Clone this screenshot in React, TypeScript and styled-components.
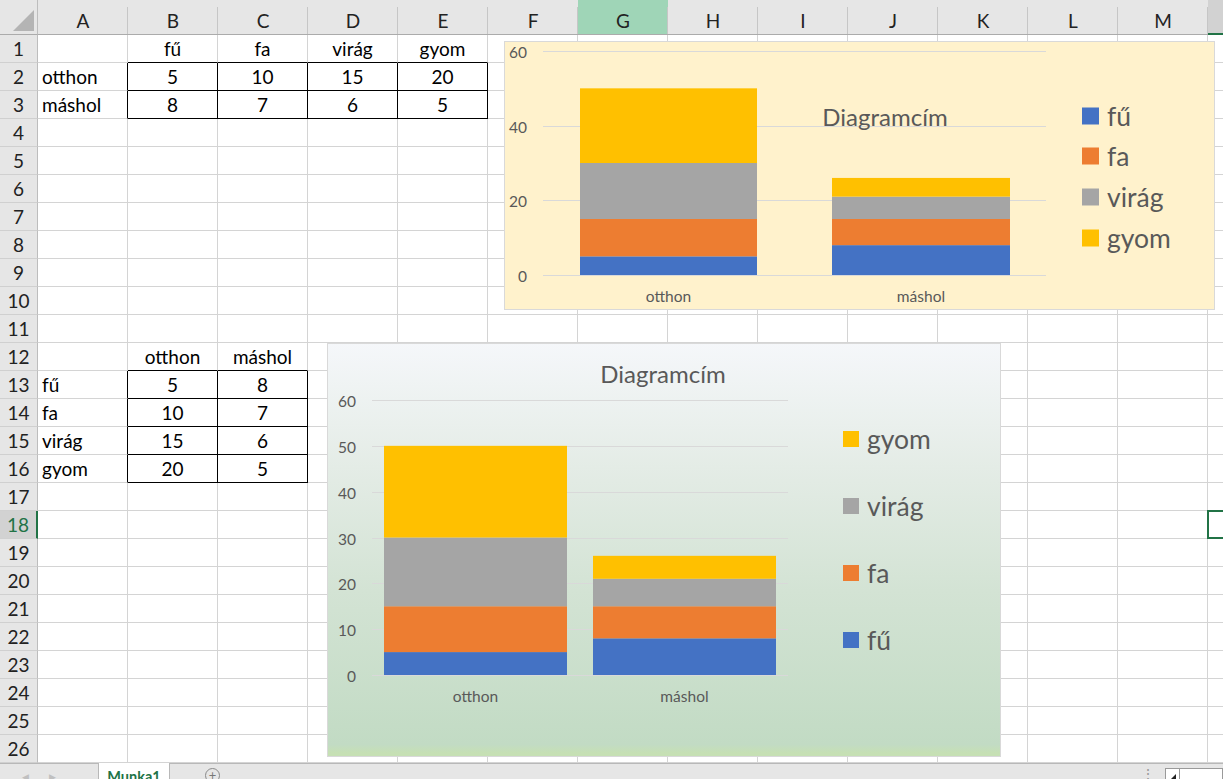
import React from "react";
import styled, { createGlobalStyle } from "styled-components";

const GlobalStyle = createGlobalStyle`
  html, body {
    margin: 0;
    padding: 0;
    background: #ffffff;
    overflow: hidden;
  }
  body {
    font-family: Lato, "Noto Sans", sans-serif;
  }
`;

const GREEN = "#217346";
const GRID = "#d4d4d4";
const SERIES = [
  { name: "fű", color: "#4472c4" },
  { name: "fa", color: "#ed7d31" },
  { name: "virág", color: "#a5a5a5" },
  { name: "gyom", color: "#ffc000" },
];
const HOME = [5, 10, 15, 20];
const AWAY = [8, 7, 6, 5];

const COLS = ["A", "B", "C", "D", "E", "F", "G", "H", "I", "J", "K", "L", "M", "N"];
const ROWS = 26;
const SELECTED_COL = "N";
const SELECTED_ROW = 18;
const HIGHLIGHT_COL = "G";

type CellData = { text: string; align: "left" | "center" };
const cells: Record<string, CellData> = {};
const put = (ref: string, text: string, align: "left" | "center" = "center") => {
  cells[ref] = { text, align };
};

// first table: categories as rows
put("A2", "otthon", "left");
put("A3", "máshol", "left");
["B", "C", "D", "E"].forEach((c, i) => {
  put(`${c}1`, SERIES[i].name);
  put(`${c}2`, String(HOME[i]));
  put(`${c}3`, String(AWAY[i]));
});

// second table: transposed
put("B12", "otthon");
put("C12", "máshol");
SERIES.forEach((s, i) => {
  put(`A${13 + i}`, s.name, "left");
  put(`B${13 + i}`, String(HOME[i]));
  put(`C${13 + i}`, String(AWAY[i]));
});

const boxes = [
  { c0: 1, c1: 4, r0: 2, r1: 3 },
  { c0: 1, c1: 2, r0: 13, r1: 16 },
];
const inBox = (ci: number, r: number) =>
  boxes.some((b) => ci >= b.c0 && ci <= b.c1 && r >= b.r0 && r <= b.r1);

const Page = styled.div`
  display: flex;
  flex-direction: column;
  height: 779px;
  overflow: hidden;
`;

const SheetArea = styled.div`
  position: relative;
  height: 763px;
  overflow: hidden;
  flex: none;
`;

const Grid = styled.div`
  display: grid;
  grid-template-columns: 38px repeat(${COLS.length}, 90px);
  grid-template-rows: 35px repeat(${ROWS}, 28px);
  width: max-content;
`;

const Corner = styled.div`
  background: #e6e6e6;
  border-right: 1px solid #bdbdbd;
  border-bottom: 1px solid #ababab;
  display: flex;
  align-items: flex-end;
  justify-content: flex-end;
  padding: 0 3px 3px 0;
  box-sizing: border-box;
`;

const ColHead = styled.div<{ $mode: "plain" | "chart" | "active" }>`
  position: relative;
  box-sizing: border-box;
  background: ${(p) => (p.$mode === "chart" ? "#9fd5b7" : p.$mode === "active" ? "#d2d2d2" : "#e6e6e6")};
  border-bottom: ${(p) => (p.$mode === "active" ? `2px solid ${GREEN}` : "1px solid #ababab")};
  color: #222;
  font-size: 19px;
  display: flex;
  align-items: center;
  justify-content: center;
  padding-top: 7px;
  &::after {
    content: "";
    position: absolute;
    right: 0;
    top: 7px;
    bottom: 0;
    width: 1px;
    background: #c6c6c6;
  }
`;

const RowHead = styled.div<{ $active: boolean }>`
  box-sizing: border-box;
  background: ${(p) => (p.$active ? "#d2d2d2" : "#e6e6e6")};
  border-right: ${(p) => (p.$active ? `2px solid ${GREEN}` : "1px solid #bdbdbd")};
  border-bottom: 1px solid #d0d0d0;
  color: ${(p) => (p.$active ? GREEN : "#222")};
  font-size: 19px;
  display: flex;
  align-items: center;
  justify-content: center;
`;

const Cell = styled.div<{ $align: "left" | "center"; $right: boolean; $bottom: boolean; $selected: boolean }>`
  position: relative;
  box-sizing: border-box;
  border-right: 1px solid ${(p) => (p.$right ? "#000" : GRID)};
  border-bottom: 1px solid ${(p) => (p.$bottom ? "#000" : GRID)};
  font-size: 19px;
  color: #000;
  display: flex;
  align-items: center;
  justify-content: ${(p) => (p.$align === "left" ? "flex-start" : "center")};
  padding: 0 4px;
  white-space: nowrap;
  &::after {
    content: "";
    display: ${(p) => (p.$selected ? "block" : "none")};
    position: absolute;
    left: -1px;
    top: -1px;
    right: -1px;
    bottom: -1px;
    border: 2px solid ${GREEN};
  }
`;

const CornerMark = () => (
  <svg width="21" height="21" viewBox="0 0 21 21">
    <polygon points="21,0 21,21 0,21" fill="#b4b4b4" />
  </svg>
);

/* ---------- charts ---------- */

const ChartFrame = styled.div<{ $x: number; $y: number; $w: number; $h: number; $bg: string }>`
  position: absolute;
  left: ${(p) => p.$x}px;
  top: ${(p) => p.$y}px;
  width: ${(p) => p.$w}px;
  height: ${(p) => p.$h}px;
  outline: 1px solid #d9d9d9;
  outline-offset: -1px;
  background: ${(p) => p.$bg};
  svg {
    display: block;
    overflow: visible;
  }
`;

type ChartGeo = {
  w: number;
  h: number;
  gridX0: number;
  gridX1: number;
  baseY: number;
  topY: number;
  step: number;
  labelX: number;
  bars: { x: number; w: number; values: number[]; label: string }[];
  catY: number;
  title: { x: number; y: number };
  legend: { x: number; size: number; ys: number[]; order: number[]; font: number };
};

const TEXT = "#595959";
const FONT = "Lato, 'Noto Sans', sans-serif";

const StackedChart: React.FC<{ g: ChartGeo }> = ({ g }) => {
  const unit = (g.baseY - g.topY) / 60;
  const ticks: number[] = [];
  for (let v = 0; v <= 60; v += g.step) ticks.push(v);
  return (
    <svg width={g.w} height={g.h} viewBox={`0 0 ${g.w} ${g.h}`}>
      {ticks.map((v) => {
        const y = Math.round(g.baseY - v * unit) + 0.5;
        return (
          <g key={v}>
            <line x1={g.gridX0} x2={g.gridX1} y1={y} y2={y} stroke="#d9d9d9" strokeWidth={1} />
            <text
              x={g.labelX}
              y={y}
              textAnchor="end"
              dominantBaseline="central"
              fontFamily={FONT}
              fontSize={15.5}
              fill={TEXT}
            >
              {v}
            </text>
          </g>
        );
      })}
      {g.bars.map((b) => {
        let acc = 0;
        return (
          <g key={b.label}>
            {b.values.map((v, i) => {
              const y0 = g.baseY - acc * unit;
              acc += v;
              const y1 = g.baseY - acc * unit;
              return <rect key={i} x={b.x} y={y1} width={b.w} height={y0 - y1} fill={SERIES[i].color} />;
            })}
            <text
              x={b.x + b.w / 2}
              y={g.catY}
              textAnchor="middle"
              dominantBaseline="central"
              fontFamily={FONT}
              fontSize={15.5}
              fill={TEXT}
            >
              {b.label}
            </text>
          </g>
        );
      })}
      <text
        x={g.title.x}
        y={g.title.y}
        textAnchor="middle"
        dominantBaseline="central"
        fontFamily={FONT}
        fontSize={24}
        fill={TEXT}
      >
        Diagramcím
      </text>
      {g.legend.order.map((si, k) => {
        const cy = g.legend.ys[k];
        return (
          <g key={si}>
            <rect
              x={g.legend.x}
              y={cy - g.legend.size / 2}
              width={g.legend.size}
              height={g.legend.size}
              fill={SERIES[si].color}
            />
            <text
              x={g.legend.x + g.legend.size + 8}
              y={cy}
              dominantBaseline="central"
              fontFamily={FONT}
              fontSize={g.legend.font}
              fill={TEXT}
            >
              {SERIES[si].name}
            </text>
          </g>
        );
      })}
    </svg>
  );
};

const topChart: ChartGeo = {
  w: 711,
  h: 269,
  gridX0: 39,
  gridX1: 542,
  baseY: 234,
  topY: 10,
  step: 20,
  labelX: 23,
  bars: [
    { x: 76, w: 177, values: HOME, label: "otthon" },
    { x: 328, w: 178, values: AWAY, label: "máshol" },
  ],
  catY: 255,
  title: { x: 381, y: 75 },
  legend: { x: 578, size: 17, ys: [75, 115, 156, 197], order: [0, 1, 2, 3], font: 26.5 },
};

const bottomChart: ChartGeo = {
  w: 674,
  h: 414,
  gridX0: 45,
  gridX1: 461,
  baseY: 332,
  topY: 57,
  step: 10,
  labelX: 29,
  bars: [
    { x: 57, w: 183, values: HOME, label: "otthon" },
    { x: 266, w: 183, values: AWAY, label: "máshol" },
  ],
  catY: 353,
  title: { x: 336, y: 30 },
  legend: { x: 516, size: 16, ys: [96, 163, 230, 297], order: [3, 2, 1, 0], font: 26.5 },
};

/* ---------- sheet tabs ---------- */

const TabBar = styled.div`
  flex: 1;
  background: #e6e6e6;
  border-top: 1px solid #b8b8b8;
  display: flex;
  align-items: flex-start;
  position: relative;
`;

const NavArrows = styled.div`
  width: 98px;
  display: flex;
  gap: 20px;
  padding: 7px 0 0 22px;
  box-sizing: border-box;
  color: #c0c0c0;
  font-size: 9px;
`;

const Tab = styled.div`
  width: 72px;
  height: 26px;
  box-sizing: border-box;
  margin-top: -1px;
  background: #ffffff;
  border-left: 1px solid #b8b8b8;
  border-right: 1px solid #b8b8b8;
  color: ${GREEN};
  font-weight: 700;
  font-size: 14.5px;
  display: flex;
  justify-content: center;
  padding-top: 5px;
`;

const AddSheet = styled.div`
  margin: 4px 0 0 35px;
  width: 15px;
  height: 15px;
  border: 1px solid #8a8a8a;
  border-radius: 50%;
  box-sizing: border-box;
  display: flex;
  align-items: center;
  justify-content: center;
  color: #777;
  font-size: 13px;
  line-height: 1;
`;

const RightTools = styled.div`
  margin-left: auto;
  display: flex;
  align-items: flex-start;
  gap: 10px;
  padding-top: 4px;
`;

const Dots = styled.div`
  color: #9a9a9a;
  font-size: 14px;
  line-height: 1;
  margin-top: -1px;
`;

const ScrollBox = styled.div`
  display: flex;
  align-items: flex-start;
  height: 20px;
  border: 1px solid #9a9a9a;
  background: #fff;
  width: 58px;
  box-sizing: border-box;
`;

const ScrollArrow = styled.div`
  width: 14px;
  height: 100%;
  border-right: 1px solid #9a9a9a;
  display: flex;
  align-items: flex-start;
  justify-content: center;
  padding-top: 5px;
  box-sizing: border-box;
`;

export default function App() {
  return (
    <>
      <GlobalStyle />
      <Page>
        <SheetArea>
          <Grid>
            <Corner>
              <CornerMark />
            </Corner>
            {COLS.map((c) => (
              <ColHead
                key={c}
                $mode={c === HIGHLIGHT_COL ? "chart" : c === SELECTED_COL ? "active" : "plain"}
              >
                {c}
              </ColHead>
            ))}
            {Array.from({ length: ROWS }, (_, ri) => {
              const r = ri + 1;
              return (
                <React.Fragment key={r}>
                  <RowHead $active={r === SELECTED_ROW}>{r}</RowHead>
                  {COLS.map((c, ci) => {
                    const ref = `${c}${r}`;
                    const d = cells[ref];
                    return (
                      <Cell
                        key={ref}
                        $align={d ? d.align : "center"}
                        $right={inBox(ci, r) || inBox(ci + 1, r)}
                        $bottom={inBox(ci, r) || inBox(ci, r + 1)}
                        $selected={c === SELECTED_COL && r === SELECTED_ROW}
                      >
                        {d ? d.text : null}
                      </Cell>
                    );
                  })}
                </React.Fragment>
              );
            })}
          </Grid>

          <ChartFrame $x={504} $y={41} $w={711} $h={269} $bg="#fff2cc">
            <StackedChart g={topChart} />
          </ChartFrame>

          <ChartFrame
            $x={327}
            $y={343}
            $w={674}
            $h={414}
            $bg="linear-gradient(180deg, #f5f7fa 0%, #e4ece6 30%, #d3e3d4 60%, #c2dbc4 97%, #c6e0b4 99%, #c6e0b4 100%)"
          >
            <StackedChart g={bottomChart} />
          </ChartFrame>
        </SheetArea>

        <TabBar>
          <NavArrows>
            <span>◀</span>
            <span>▶</span>
          </NavArrows>
          <Tab>Munka1</Tab>
          <AddSheet>+</AddSheet>
          <RightTools>
            <Dots>⋮</Dots>
            <ScrollBox>
              <ScrollArrow>
                <svg width="7" height="7" viewBox="0 0 7 7">
                  <polygon points="7,0 7,7 0,7" fill="#222" />
                </svg>
              </ScrollArrow>
            </ScrollBox>
          </RightTools>
        </TabBar>
      </Page>
    </>
  );
}
